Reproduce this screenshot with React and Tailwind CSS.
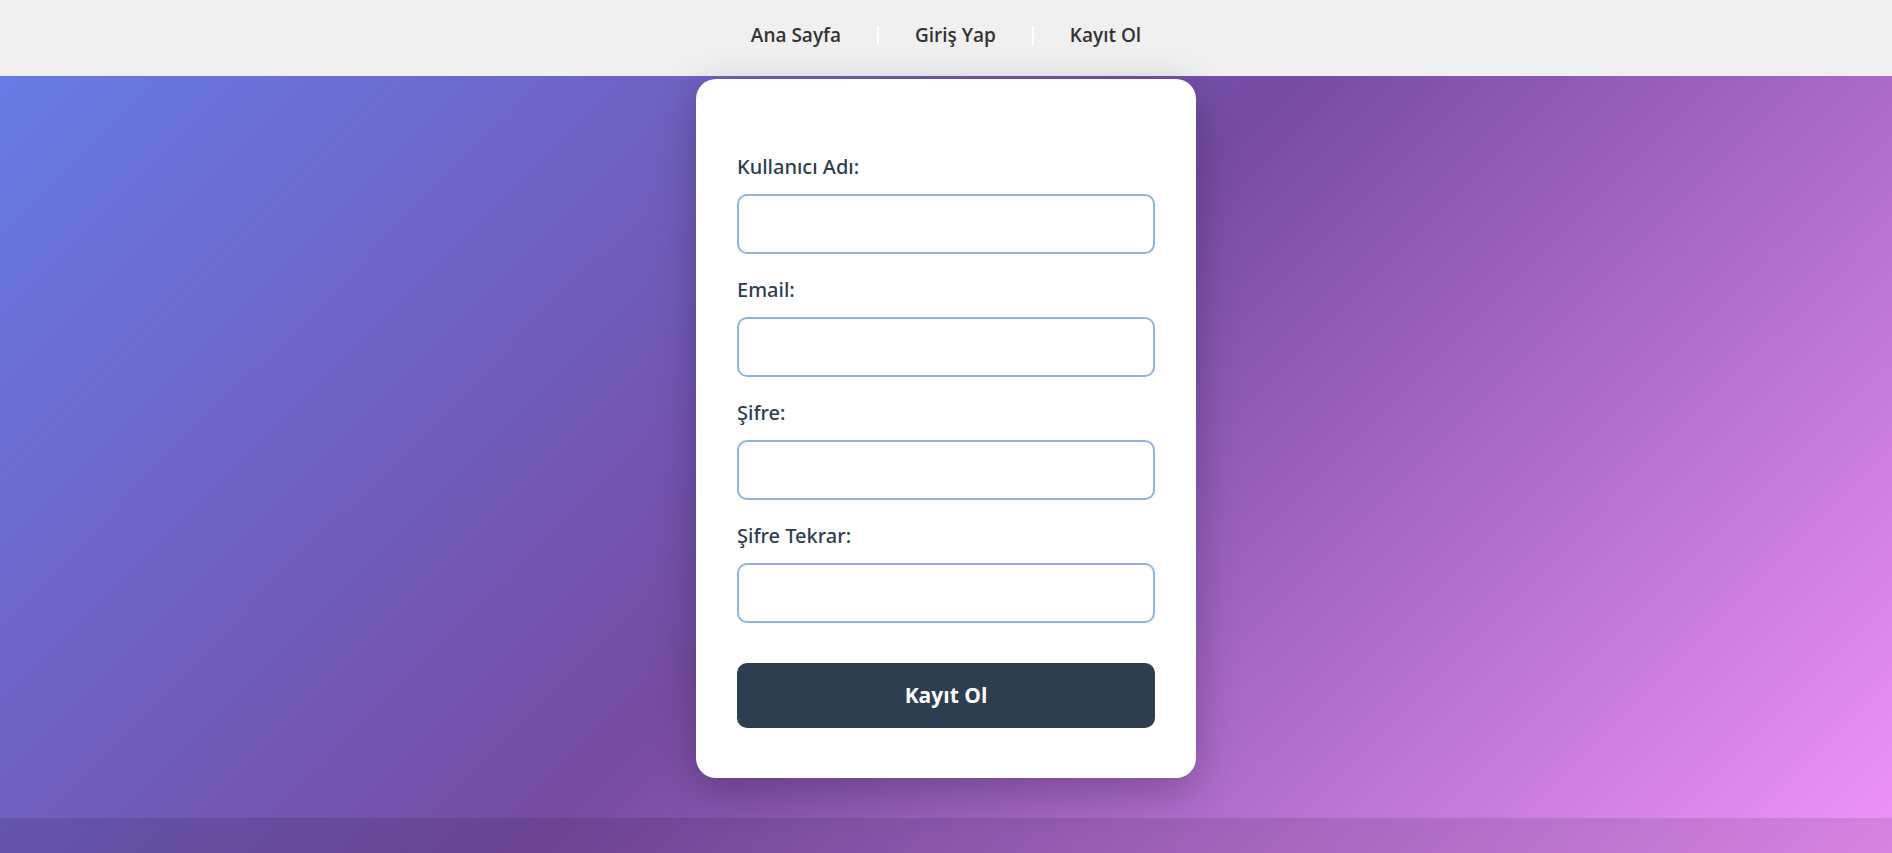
const FIELDS = [
  { id: 'username', label: 'Kullanıcı Adı:', type: 'text' },
  { id: 'email', label: 'Email:', type: 'email' },
  { id: 'password', label: 'Şifre:', type: 'password' },
  { id: 'password2', label: 'Şifre Tekrar:', type: 'password' },
];

const NAV = ['Ana Sayfa', 'Giriş Yap', 'Kayıt Ol'];

const App = () => {
  return (
    <div
      className="min-h-screen flex flex-col bg-[linear-gradient(135deg,#667eea_0%,#764ba2_50%,#f093fb_100%)]"
      style={{ fontFamily: '"Open Sans", "Noto Sans", sans-serif' }}
    >
      {/* Navbar */}
      <nav className="h-[76px] bg-[#f0f0f0] flex items-center justify-center pb-[6px]">
        {NAV.map((item, i) => (
          <div key={item} className="flex items-center">
            {i > 0 && <span className="w-[2px] h-[19px] bg-white" />}
            <a href="#" className="px-[36px] text-[19px] font-semibold text-[#333] leading-none">
              {item}
            </a>
          </div>
        ))}
      </nav>

      {/* Register form */}
      <main className="flex-1 flex justify-center pt-[3px]">
        <div className="w-[500px] h-fit bg-white rounded-[20px] shadow-[0_12px_40px_rgba(0,0,0,0.25)] px-[41px] pt-[75px] pb-[50px]">
          {FIELDS.map(f => (
            <div key={f.id} className="mb-[23px]">
              <label htmlFor={f.id} className="block text-[20px] leading-[26px] font-medium text-[#2c3e50] mb-[14px]"
                style={{ fontFamily: '"Noto Sans", "Open Sans", sans-serif' }}>
                {f.label}
              </label>
              <input id={f.id} type={f.type}
                className="block w-full h-[60px] border-2 border-[#90b4de] rounded-[10px] px-3 outline-none bg-white" />
            </div>
          ))}
          <button className="mt-[17px] w-full h-[65px] bg-[#2c3e50] text-white text-[21px] font-bold rounded-[10px]">
            Kayıt Ol
          </button>
        </div>
      </main>

      <footer className="h-[35px] bg-black/10" />
    </div>
  );
};

export default App;
